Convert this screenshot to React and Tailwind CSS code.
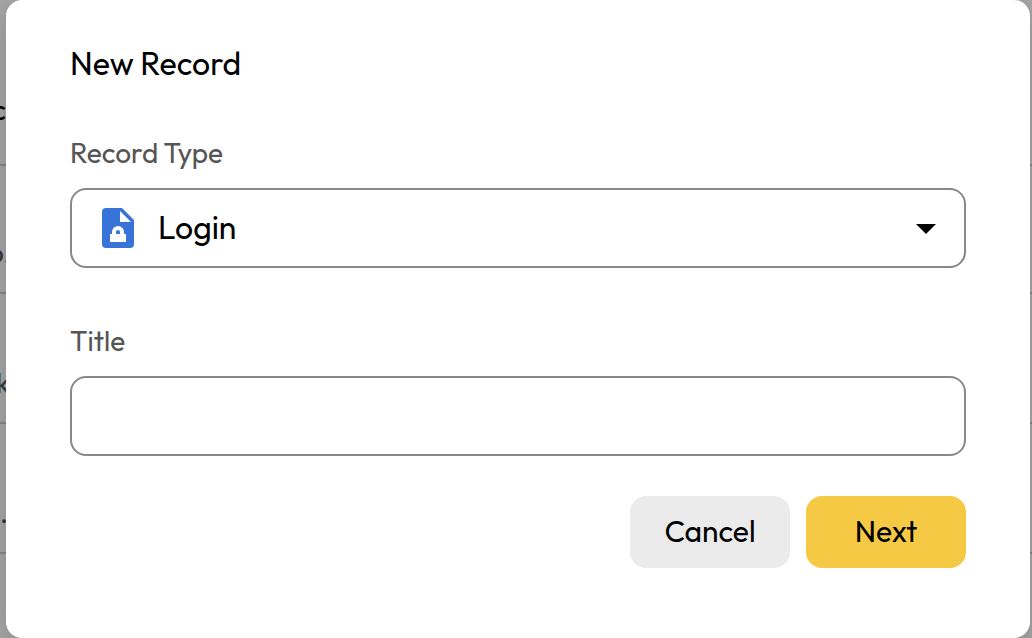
import React from "react";

const backdropRows = [
  { text: "c", height: "h-[166px]", row: "pb-9", cell: "justify-end text-black" },
  { text: "o.", height: "h-32", row: "pb-[21px]", cell: "-ml-3 justify-start text-[#333333]" },
  { text: "k", height: "h-[130px]", row: "pb-[21px]", cell: "-ml-1 justify-start text-[#333333]" },
  { text: ".", height: "h-[130px]", row: "pb-[21px]", cell: "justify-start text-[#333333]" },
];

function BackdropList() {
  return (
    <div aria-hidden="true" className="absolute inset-0 overflow-hidden">
      {backdropRows.map((item) => (
        <div
          key={item.text}
          className={`${item.height} ${item.row} flex items-end border-b-2 border-[#878787]`}
        >
          <div className={`${item.cell} flex w-1.5 text-[28px] leading-9`}>{item.text}</div>
        </div>
      ))}
    </div>
  );
}

function FileLockIcon() {
  return (
    <svg
      aria-hidden="true"
      viewBox="0 0 32 40"
      className="pointer-events-none absolute top-5 left-8 h-10 w-8"
    >
      <path d="M4 0H20L32 12V36a4 4 0 0 1-4 4H4a4 4 0 0 1-4-4V4a4 4 0 0 1 4-4Z" fill="#3874d8" />
      <path d="M18 3V14H29Z" fill="#fff" />
      <path
        fillRule="evenodd"
        d="M8 26h2v-2a6 6 0 0 1 12 0v2h2v8H8ZM14 26h4v-2a2 2 0 0 0-4 0Z"
        fill="#fff"
      />
    </svg>
  );
}

export default function App() {
  return (
    <div className="relative min-h-screen bg-[#a6a6a6] pr-0.5 pl-1.5 font-['Outfit','Lato',sans-serif] text-black">
      <BackdropList />
      <main
        role="dialog"
        aria-labelledby="dialog-title"
        className="relative rounded-2xl bg-white px-16 pt-[43px] pb-[70px] shadow-[0_6px_24px_rgba(0,0,0,0.18)]"
      >
        <h1 id="dialog-title" className="text-[32px] leading-10">
          New Record
        </h1>
        <form className="mt-[52px]" onSubmit={(e) => e.preventDefault()}>
          <label htmlFor="record-type" className="block text-[28px] leading-9 text-[#555555]">
            Record Type
          </label>
          <div className="relative mt-[17px]">
            <select
              id="record-type"
              className="block h-20 w-full appearance-none rounded-2xl border-2 border-[#888888] bg-white pr-16 pb-0.5 pl-[86px] text-[32px]"
            >
              <option>Login</option>
            </select>
            <FileLockIcon />
            <svg
              aria-hidden="true"
              viewBox="0 0 20 10"
              className="pointer-events-none absolute top-9 right-[30px] h-2.5 w-5"
            >
              <path d="M0 0H20L10 10Z" fill="#000" />
            </svg>
          </div>
          <label htmlFor="title" className="mt-[55px] block text-[28px] leading-9 text-[#555555]">
            Title
          </label>
          <input
            id="title"
            type="text"
            className="mt-[17px] block h-20 w-full rounded-2xl border-2 border-[#888888] bg-white px-8 text-[32px]"
          />
          <div className="mt-10 flex justify-end gap-4">
            <button type="button" className="h-[72px] w-40 rounded-2xl bg-[#ebebeb] pb-0.5 text-[30px]">
              Cancel
            </button>
            <button type="submit" className="h-[72px] w-40 rounded-2xl bg-[#f5c944] pb-0.5 text-[30px]">
              Next
            </button>
          </div>
        </form>
      </main>
    </div>
  );
}
